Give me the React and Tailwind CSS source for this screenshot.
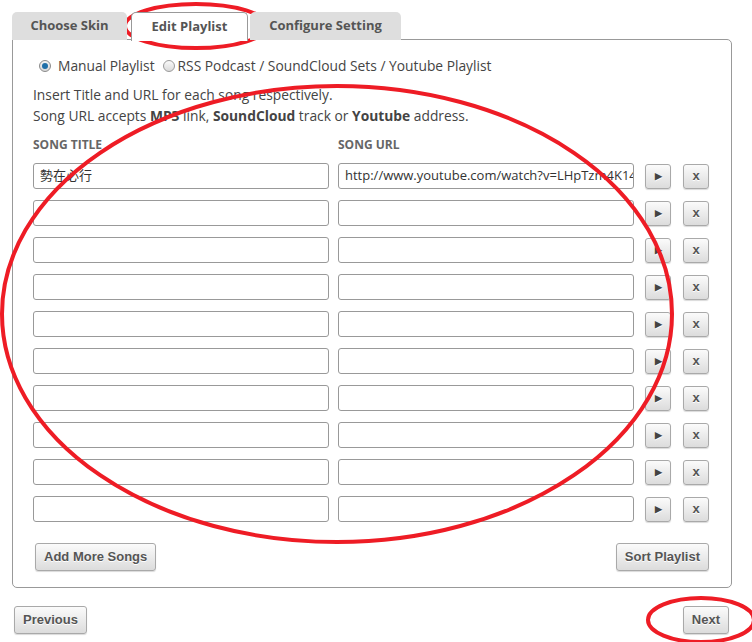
import React from 'react';

const rows = [
  { title: '勢在必行', url: 'http://www.youtube.com/watch?v=LHpTzm4K14Y' },
  ...Array.from({ length: 9 }, () => ({ title: '', url: '' })),
];

function GrayButton({ children, className = '' }) {
  return (
    <button
      className={`rounded-[3px] border border-[#a9a9a9] bg-gradient-to-b from-[#fbfbfb] to-[#dcdcdc] text-[#555] font-bold shadow-[0_1px_1px_rgba(0,0,0,0.15)] [text-shadow:0_1px_0_#fff] ${className}`}
      style={{ fontFamily: '"Liberation Sans", Arial, sans-serif' }}
    >
      {children}
    </button>
  );
}

export default function App() {
  return (
    <div
      className="relative w-[752px] h-[642px] bg-white overflow-hidden text-[#444]"
      style={{ fontFamily: '"Open Sans", "Noto Sans CJK TC", sans-serif' }}
    >
      <div className="ml-[12px] w-[720px] pt-[12px]">
        {/* tabs */}
        <div className="flex items-end h-[28px] relative z-10">
          <div className="w-[115px] h-[28px] rounded-t-[5px] bg-[#dedede] flex items-center justify-center text-[13px] font-bold text-[#555]">
            Choose Skin
          </div>
          <div className="ml-[4px] w-[117px] h-[29px] rounded-t-[5px] bg-white border border-[#999] border-b-0 flex items-center justify-center text-[13px] font-bold text-[#555] -mb-px">
            Edit Playlist
          </div>
          <div className="ml-[2px] w-[151px] h-[28px] rounded-t-[5px] bg-[#dedede] flex items-center justify-center text-[13px] font-bold text-[#555]">
            Configure Setting
          </div>
        </div>

        {/* panel */}
        <div className="border border-[#999] rounded-b-[5px] rounded-tr-[5px] pl-[20px] pr-[21px] pt-[16px] pb-[16px] -mt-px">
          <div className="flex items-center h-[20px] text-[13.8px]">
            <span className="w-[12px] h-[12px] rounded-full border border-[#8a8a8a] bg-gradient-to-b from-[#f4f4f4] to-[#d8d8d8] flex items-center justify-center ml-[6px]">
              <span className="w-[6px] h-[6px] rounded-full bg-[#1f6fa8]" />
            </span>
            <span className="ml-[7px]">Manual Playlist</span>
            <span className="ml-[8px] w-[12px] h-[12px] rounded-full border border-[#9a9a9a] bg-gradient-to-b from-[#fafafa] to-[#dadada]" />
            <span className="ml-[3px]">RSS Podcast / SoundCloud Sets / Youtube Playlist</span>
          </div>

          <div className="mt-[8px] text-[13.8px] leading-[21px]">
            <div>Insert Title and URL for each song respectively.</div>
            <div>
              Song URL accepts <b>MP3</b> link, <b>SoundCloud</b> track or <b>Youtube</b> address.
            </div>
          </div>

          <div className="mt-[11px] flex text-[12px] leading-[16px] font-bold text-[#666]">
            <div className="w-[305px]">SONG TITLE</div>
            <div>SONG URL</div>
          </div>

          <div className="mt-[10px] flex flex-col gap-[11px]">
            {rows.map((r, i) => (
              <div key={i} className="flex items-center h-[26px]">
                <div className="w-[296px] h-[26px] border border-[#999] rounded-[3px] px-[6px] flex items-center text-[13px] text-[#333] overflow-hidden whitespace-nowrap">
                  {r.title}
                </div>
                <div className="ml-[9px] w-[296px] h-[26px] border border-[#999] rounded-[3px] pl-[6px] flex items-center text-[13px] text-[#333] overflow-hidden whitespace-nowrap">
                  {r.url}
                </div>
                <GrayButton className="ml-[11px] w-[26px] h-[25px] flex items-center justify-center">
                  <span className="text-[#444] text-[9px] leading-none">&#9654;</span>
                </GrayButton>
                <GrayButton className="ml-[12px] w-[26px] h-[25px] flex items-center justify-center text-[13px] leading-none pb-[2px]">
                  x
                </GrayButton>
              </div>
            ))}
          </div>

          <div className="mt-[21px] flex justify-between pl-[2px] pr-[1px]">
            <GrayButton className="h-[28px] px-[8px] text-[13px]">Add More Songs</GrayButton>
            <GrayButton className="h-[28px] px-[8px] text-[13px]">Sort Playlist</GrayButton>
          </div>
        </div>

        {/* footer */}
        <div className="mt-[18px] flex justify-between pl-[2px] pr-[3px]">
          <GrayButton className="h-[28px] px-[8px] text-[13px]">Previous</GrayButton>
          <GrayButton className="h-[28px] px-[8px] text-[13px]">Next</GrayButton>
        </div>
      </div>

      {/* red annotation ellipses */}
      <svg className="absolute inset-0 pointer-events-none" width="752" height="642" viewBox="0 0 752 642">
        <g fill="none" stroke="#ee1c25" strokeWidth="4">
          <ellipse cx="196" cy="26" rx="71" ry="22" />
          <ellipse cx="337" cy="314" rx="335" ry="228" />
          <ellipse cx="701" cy="620" rx="53" ry="22" />
        </g>
      </svg>
    </div>
  );
}
